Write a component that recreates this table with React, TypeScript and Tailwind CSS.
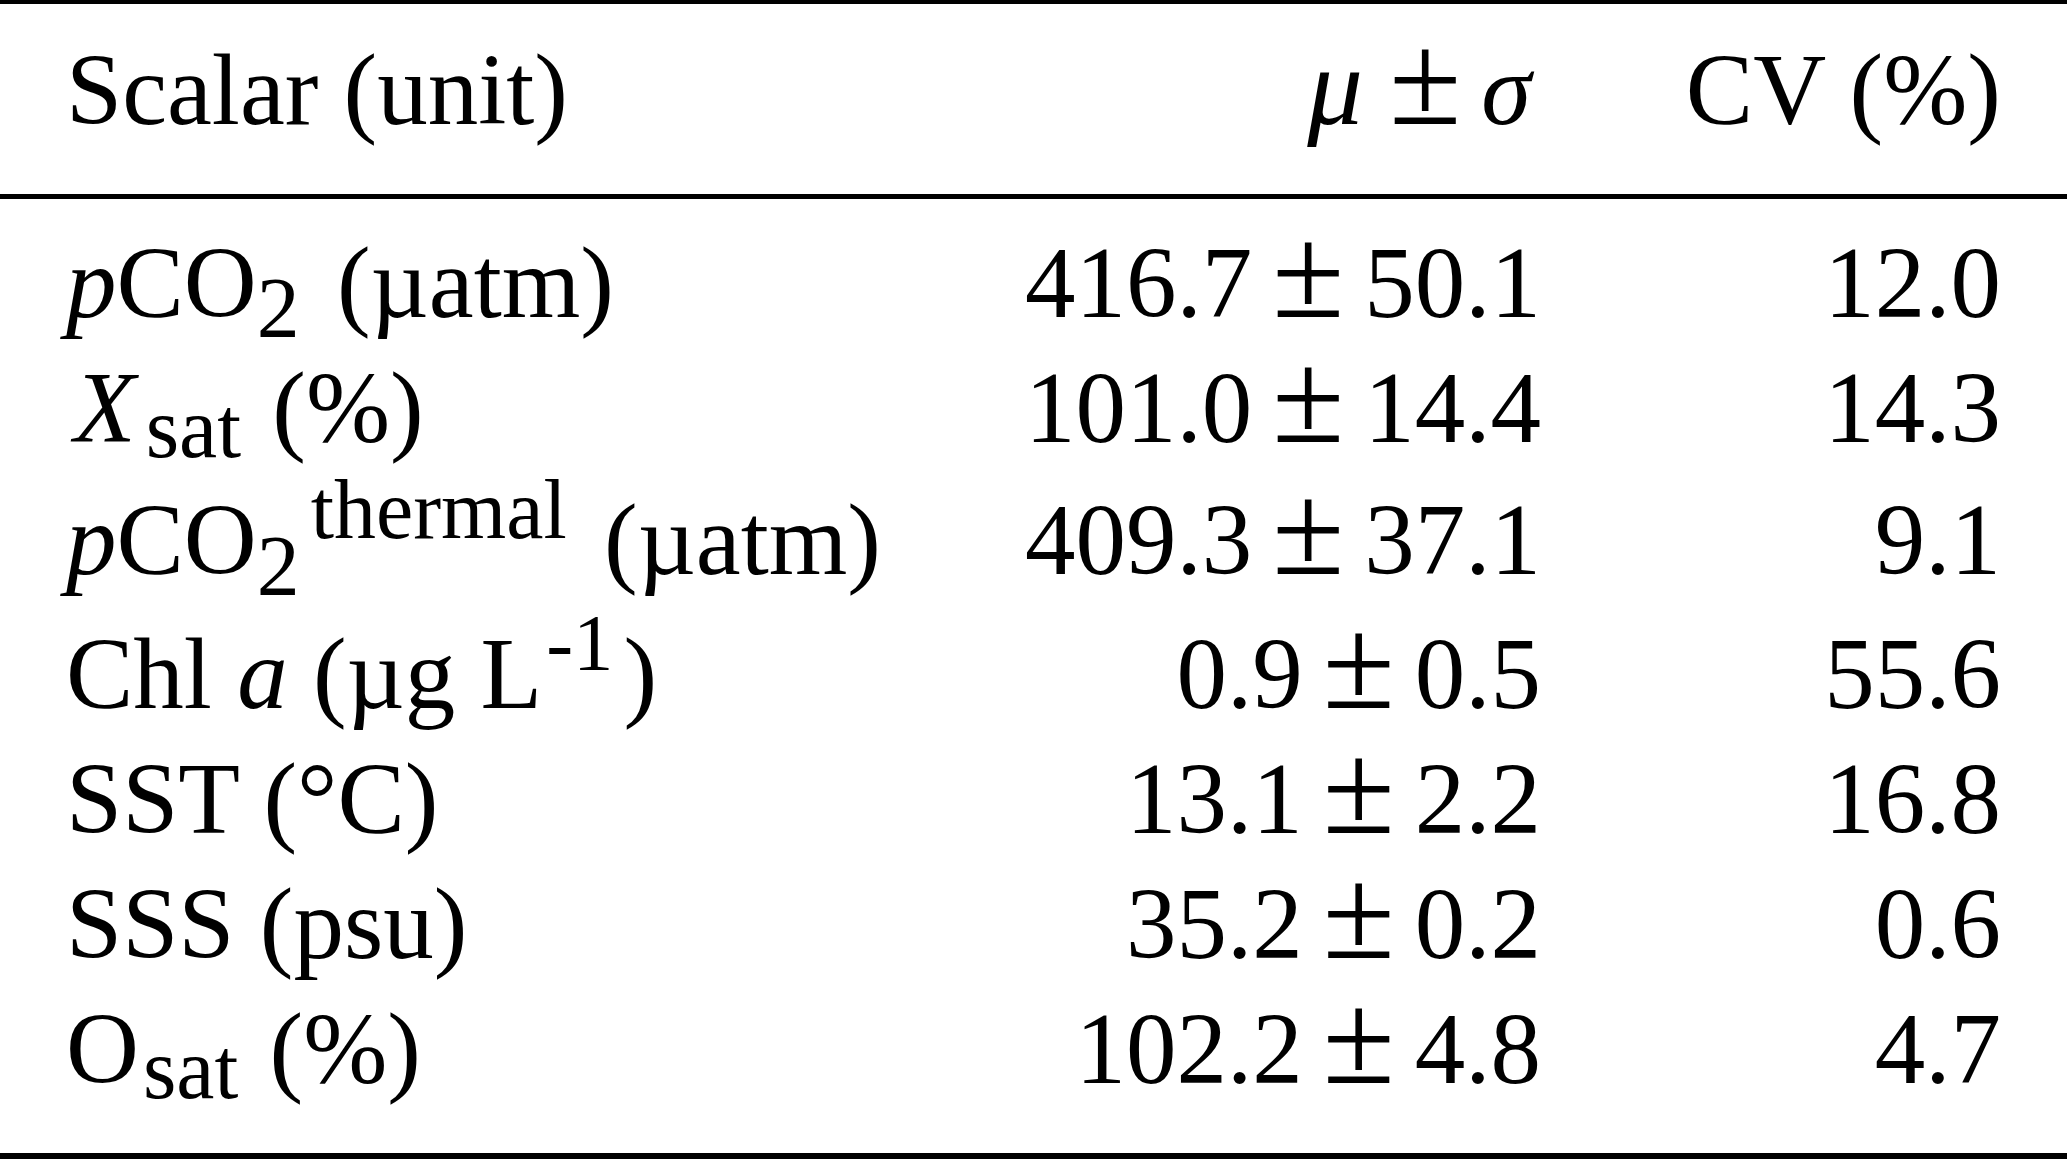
type Row = {
  label: React.ReactNode;
  mean: string;
  sd: string;
  cv: string;
  gap: string;
};

function Pm() {
  return <span className="mx-[20px] text-[1.3em] leading-[0]">±</span>;
}

const rows: Row[] = [
  {
    label: (
      <>
        <i>p</i>CO<sub className="mr-[12px] text-[0.85em] bottom-[-20px]">2</sub> (µatm)
      </>
    ),
    mean: "416.7",
    sd: "50.1",
    cv: "12.0",
    gap: "mt-0",
  },
  {
    label: (
      <>
        <i className="ml-[8px]">X</i>
        <sub className="ml-[10px] mr-[6px] text-[0.85em] bottom-[-15px]">sat</sub> (%)
      </>
    ),
    mean: "101.0",
    sd: "14.4",
    cv: "14.3",
    gap: "mt-0",
  },
  {
    label: (
      <>
        <i>p</i>CO<sub className="text-[0.85em] bottom-[-21px]">2</sub>
        <sup className="ml-[11px] mr-[12px] text-[0.83em] top-[-36px]">thermal</sup> (µatm)
      </>
    ),
    mean: "409.3",
    sd: "37.1",
    cv: "9.1",
    gap: "mt-[7px]",
  },
  {
    label: (
      <>
        Chl <i>a</i> (µg L<sup className="ml-[4px] mr-[10px] text-[0.8em] top-[-38px]">-1</sup>)
      </>
    ),
    mean: "0.9",
    sd: "0.5",
    cv: "55.6",
    gap: "mt-[9px]",
  },
  { label: "SST (°C)", mean: "13.1", sd: "2.2", cv: "16.8", gap: "mt-0" },
  { label: "SSS (psu)", mean: "35.2", sd: "0.2", cv: "0.6", gap: "mt-0" },
  {
    label: (
      <>
        O<sub className="ml-[4px] mr-[6px] text-[0.85em] bottom-[-15px]">sat</sub> (%)
      </>
    ),
    mean: "102.2",
    sd: "4.8",
    cv: "4.7",
    gap: "mt-0",
  },
];

export default function App() {
  return (
    <div className="w-[2067px] h-[1159px] bg-white text-black font-['Liberation_Serif','Times_New_Roman',serif] text-[101px] whitespace-nowrap overflow-hidden">
      <div className="h-[4px] bg-black" />

      {/* header */}
      <div className="px-[66px] pt-[24px] grid grid-cols-[1fr_541px_460px] leading-[125px]">
        <div>Scalar (unit)</div>
        <div className="text-right">
          <i className="mr-[6px] text-[1.1em] leading-[0]">μ</i>
          <Pm />
          <i className="mr-[10px]">σ</i>
        </div>
        <div className="text-right">CV (%)</div>
      </div>

      <div className="mt-[41px] h-[5px] bg-black" />

      {/* body */}
      <div className="px-[66px] pt-[22px] pb-[41px]">
        {rows.map((r, i) => (
          <div key={i} className={`grid grid-cols-[1fr_541px_460px] leading-[125px] ${r.gap}`}>
            <div>{r.label}</div>
            <div className="text-right">
              {r.mean}
              <Pm />
              {r.sd}
            </div>
            <div className="text-right">{r.cv}</div>
          </div>
        ))}
      </div>

      <div className="h-[6px] bg-black" />
    </div>
  );
}
